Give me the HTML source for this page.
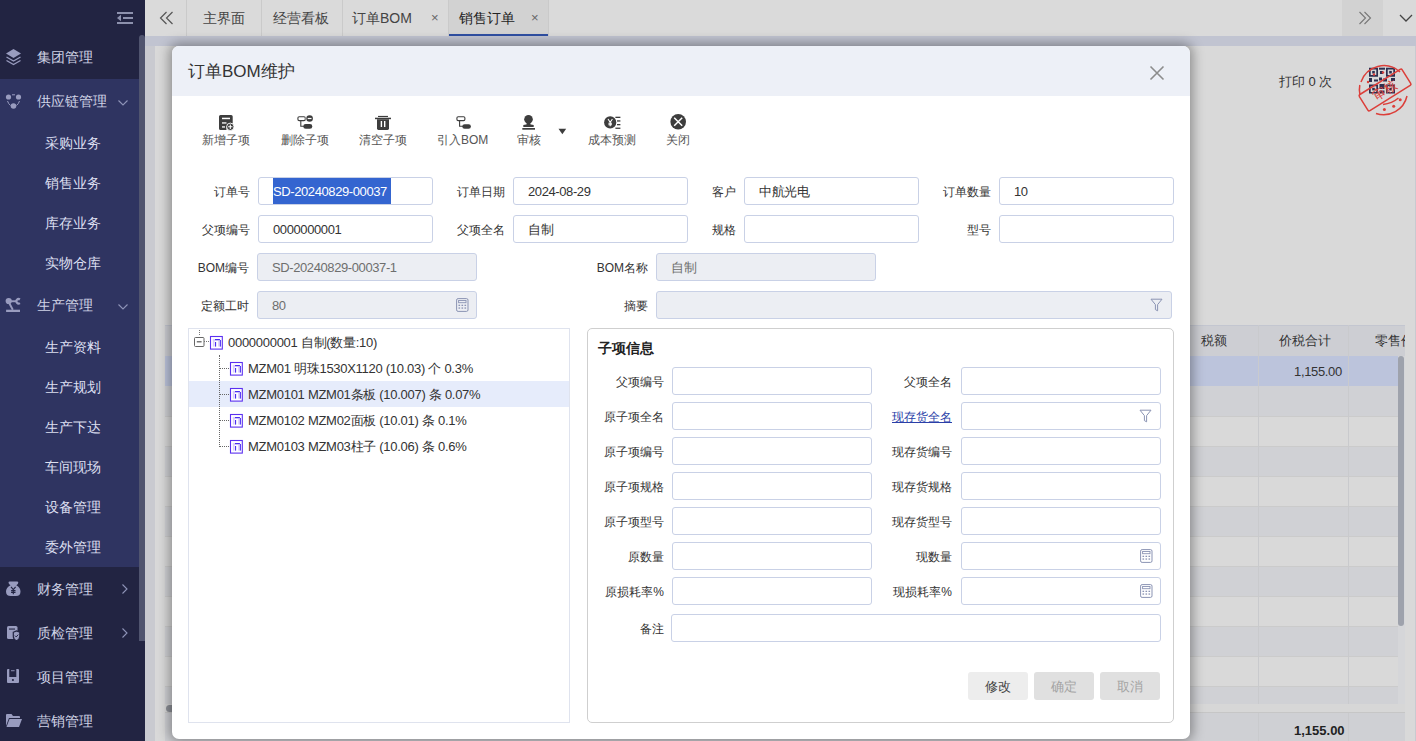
<!DOCTYPE html><html><head><meta charset="utf-8"><style>
*{margin:0;padding:0;box-sizing:border-box}
html,body{width:1416px;height:741px;overflow:hidden;background:#d9d9d9;font-family:"Liberation Sans",sans-serif;font-size:13px;color:#333;position:relative}
.a{position:absolute}
.t{position:absolute;white-space:nowrap;line-height:20px}
.mi{position:absolute;left:37px;font-size:14px;color:#d0d3e6;line-height:20px;white-space:nowrap}
.si{position:absolute;left:45px;font-size:14px;color:#dcdff0;line-height:20px;white-space:nowrap}
.tab{position:absolute;top:8px;font-size:14px;color:#444;line-height:20px;white-space:nowrap}
.vd{position:absolute;top:0;width:1px;height:36px;background:#cacaca}
.lbl{position:absolute;font-size:12px;color:#333;line-height:20px;text-align:right;white-space:nowrap}
.inp{position:absolute;height:28px;border:1px solid #c9d1e6;border-radius:3px;background:#fff}
.dis{background:#eceef3}
.itx{position:absolute;font-size:13px;line-height:20px;color:#333;white-space:nowrap;letter-spacing:-0.4px}
.tbl{position:absolute;top:132px;font-size:12px;color:#555;line-height:16px;white-space:nowrap}
.tr{position:absolute;font-size:13px;color:#333;line-height:20px;white-space:nowrap;letter-spacing:-0.28px}
.ic{position:absolute}
</style></head><body>
<div class="a" style="left:145px;top:0;width:1271px;height:36px;background:#dadada"></div>
<div class="a" style="left:145px;top:36px;width:1271px;height:10px;background:#c1c4d1"></div>
<div class="a" style="left:145px;top:46px;width:10px;height:695px;background:#c9cad0"></div>
<div class="a" style="left:1415px;top:46px;width:1px;height:695px;background:#c9cad0"></div>
<div class="a" style="left:449px;top:0;width:99px;height:36px;background:#d2d2d2"></div>
<div class="a" style="left:449px;top:34px;width:99px;height:2px;background:#2f4fa3"></div>
<div class="vd" style="left:186px"></div>
<div class="vd" style="left:261px"></div>
<div class="vd" style="left:342px"></div>
<div class="vd" style="left:448px"></div>
<div class="vd" style="left:548px"></div>
<div class="vd" style="left:1342px"></div>
<div class="a" style="left:1342px;top:0;width:41px;height:36px;background:#d2d2d2"></div>
<svg class="ic" style="left:159px;top:11px" width="16" height="14" viewBox="0 0 16 14"><path d="M7.5 1 L1.5 7 L7.5 13 M13.5 1 L7.5 7 L13.5 13" fill="none" stroke="#555" stroke-width="1.2"/></svg>
<div class="tab" style="left:203px">主界面</div>
<div class="tab" style="left:273px">经营看板</div>
<div class="tab" style="left:352px">订单BOM</div>
<div class="tab" style="left:431px;font-size:13px;color:#666">×</div>
<div class="tab" style="left:459px;color:#222">销售订单</div>
<div class="tab" style="left:531px;font-size:13px;color:#666">×</div>
<svg class="ic" style="left:1358px;top:11px" width="14" height="14" viewBox="0 0 14 14"><path d="M1.5 1 L7.5 7 L1.5 13 M6.5 1 L12.5 7 L6.5 13" fill="none" stroke="#777" stroke-width="1.1"/></svg>
<svg class="ic" style="left:1399px;top:13px" width="14" height="10" viewBox="0 0 14 10"><path d="M1 2 L7 8 L13 2" fill="none" stroke="#444" stroke-width="1.3"/></svg>
<div class="t" style="left:1279px;top:72px;font-size:13px;color:#333">打印 0 次</div>
<svg class="ic" style="left:1350px;top:60px" width="66" height="60" viewBox="0 0 66 60">
<g fill="#2d3050"><path d="M19 7.7h9v9h-9z M20.7 9.4v5.6h5.6v-5.6z" fill-rule="evenodd"/><rect x="22.2" y="10.9" width="2.6" height="2.6"/><path d="M36 7.7h9v9h-9z M37.7 9.4v5.6h5.6v-5.6z" fill-rule="evenodd"/><rect x="39.2" y="10.9" width="2.6" height="2.6"/><path d="M19 24.6h9v9h-9z M20.7 26.3v5.6h5.6v-5.6z" fill-rule="evenodd"/><rect x="22.2" y="27.8" width="2.6" height="2.6"/><path d="M36 24.6h9v9h-9z M37.7 26.3v5.6h5.6v-5.6z" fill-rule="evenodd"/><rect x="39.2" y="27.8" width="2.6" height="2.6"/><rect x="29" y="7.7" width="6" height="2"/><rect x="30" y="11" width="3" height="3"/><rect x="29" y="17.5" width="3" height="3"/><rect x="19" y="18" width="3" height="4"/><rect x="24" y="19.5" width="4" height="2"/><rect x="33" y="18.5" width="4" height="3"/><rect x="41" y="18" width="4" height="3"/><rect x="29.5" y="24" width="5" height="5"/><rect x="29.5" y="30.5" width="5" height="3"/></g>
<g fill="none" stroke="#dc3f3a" stroke-width="1.5">
<path d="M11 22 A24 24 0 0 1 50 12"/><path d="M57 36 A24 24 0 0 1 26 53.5"/><path d="M10 35 A24 24 0 0 1 9.8 25"/>
<g transform="rotate(-32 35 30)"><rect x="9.8" y="20.5" width="50.5" height="19" rx="1.5"/></g>
<path d="M33 44.5 Q42 43.5 48.5 38"/>
</g>
<g fill="#dc3f3a"><circle cx="34.4" cy="49.4" r="1.5"/><circle cx="43.7" cy="46.2" r="1.5"/><circle cx="50.2" cy="39.7" r="1.5"/><circle cx="18" cy="22" r="1.2"/><circle cx="24" cy="14.5" r="1.2"/><circle cx="33" cy="12.5" r="1.2"/></g>
<text x="35" y="34.5" font-size="13" fill="#dc3f3a" text-anchor="middle" transform="rotate(-32 35 30)">审核</text>
</svg>
<div class="a" style="left:165px;top:325px;width:1240px;height:31px;background:#cdced3;border-top:1px solid #c3c6d0"></div>
<div class="t" style="left:1201px;top:331px;font-size:13px;color:#333">税额</div>
<div class="t" style="left:1279px;top:331px;font-size:13px;color:#333">价税合计</div>
<div class="a" style="left:1360px;top:325px;width:45px;height:31px;overflow:hidden"><div class="t" style="left:15px;top:6px;font-size:13px;color:#333">零售价</div></div>
<div class="a" style="left:165px;top:356px;width:1233px;height:30px;background:#bcc4dc;"></div>
<div class="a" style="left:165px;top:386px;width:1233px;height:30px;background:#d0d1d5;"></div>
<div class="a" style="left:165px;top:416px;width:1233px;height:30px;background:#d9d9d9;border-top:1px solid #cbcbcb;"></div>
<div class="a" style="left:165px;top:446px;width:1233px;height:30px;background:#d0d1d5;border-top:1px solid #cbcbcb;"></div>
<div class="a" style="left:165px;top:476px;width:1233px;height:30px;background:#d9d9d9;border-top:1px solid #cbcbcb;"></div>
<div class="a" style="left:165px;top:506px;width:1233px;height:30px;background:#d0d1d5;border-top:1px solid #cbcbcb;"></div>
<div class="a" style="left:165px;top:536px;width:1233px;height:30px;background:#d9d9d9;border-top:1px solid #cbcbcb;"></div>
<div class="a" style="left:165px;top:566px;width:1233px;height:30px;background:#d0d1d5;border-top:1px solid #cbcbcb;"></div>
<div class="a" style="left:165px;top:596px;width:1233px;height:30px;background:#d9d9d9;border-top:1px solid #cbcbcb;"></div>
<div class="a" style="left:165px;top:626px;width:1233px;height:30px;background:#d0d1d5;border-top:1px solid #cbcbcb;"></div>
<div class="a" style="left:165px;top:656px;width:1233px;height:30px;background:#d9d9d9;border-top:1px solid #cbcbcb;"></div>
<div class="a" style="left:165px;top:686px;width:1233px;height:18px;background:#d0d1d5;border-top:1px solid #cbcbcb;"></div>
<div class="t" style="left:1294px;top:362px;font-size:13px;color:#333;letter-spacing:-0.35px">1,155.00</div>
<div class="a" style="left:1258px;top:325px;width:1px;height:379px;background:#c9cacd"></div>
<div class="a" style="left:1258px;top:712px;width:1px;height:29px;background:#c9cacd"></div>
<div class="a" style="left:1348px;top:325px;width:1px;height:379px;background:#c9cacd"></div>
<div class="a" style="left:1348px;top:712px;width:1px;height:29px;background:#c9cacd"></div>
<div class="a" style="left:1398px;top:356px;width:7px;height:349px;background:#d5d6d9"></div>
<div class="a" style="left:1398px;top:356px;width:6px;height:270px;background:#9ea2ac;border-radius:3px"></div>
<div class="a" style="left:165px;top:704px;width:1240px;height:8px;background:#d7d7d7"></div>
<div class="a" style="left:166px;top:705px;width:300px;height:7px;background:#8e9198;border-radius:4px"></div>
<div class="a" style="left:165px;top:712px;width:1240px;height:29px;background:#cfd0d4;border-top:1px solid #c6c6c6"></div>
<div class="a" style="left:1258px;top:713px;width:1px;height:28px;background:#c9cacd"></div>
<div class="a" style="left:1348px;top:713px;width:1px;height:28px;background:#c9cacd"></div>
<div class="t" style="left:1294px;top:721px;font-size:13px;font-weight:bold;color:#222">1,155.00</div>
<div class="a" style="left:0;top:0;width:145px;height:741px;background:#222442"></div>
<div class="a" style="left:0;top:79px;width:139px;height:488px;background:#2f3461"></div>
<div class="a" style="left:139px;top:35px;width:6px;height:606px;background:#50546f;border-radius:3px 3px 0 0"></div>
<svg class="ic" style="left:117px;top:11px" width="17" height="14" viewBox="0 0 17 14"><g fill="#8d91ad"><rect x="0" y="1" width="16" height="2"/><rect x="6" y="6" width="10" height="2"/><rect x="0" y="11" width="16" height="2"/><path d="M0 7 L4 3.8 L4 10.2 Z"/></g></svg>
<svg class="ic" style="left:5px;top:48px" width="17" height="18" viewBox="0 0 17 18"><path d="M8.5 1 L16 5.5 L8.5 10 L1 5.5 Z" fill="#999cbf"/><path d="M1.5 9 L8.5 13 L15.5 9 M1.5 12.5 L8.5 16.5 L15.5 12.5" fill="none" stroke="#999cbf" stroke-width="1.3"/></svg>
<svg class="ic" style="left:5px;top:93px" width="17" height="17" viewBox="0 0 17 17"><circle cx="3.5" cy="4" r="2.6" fill="#999cbf"/><circle cx="13.5" cy="4" r="2.6" fill="#999cbf"/><circle cx="8.5" cy="13" r="2.8" fill="#999cbf"/><path d="M7 1.8 H10 M2.5 8 Q3.5 11 5.5 12.5 M14.5 8 Q13.5 11 11.5 12.5" fill="none" stroke="#999cbf" stroke-width="1"/></svg>
<svg class="ic" style="left:5px;top:297px" width="16" height="16" viewBox="0 0 16 16"><circle cx="3.7" cy="4" r="3.1" fill="#999cbf"/><rect x="6" y="3.3" width="5" height="1.9" fill="#999cbf"/><path d="M14.9 2.5 A2.2 2.2 0 1 0 14.9 6.1" fill="none" stroke="#999cbf" stroke-width="2.2"/><path d="M4.3 6.2 L7.8 12.8" stroke="#999cbf" stroke-width="1.9"/><rect x="1.1" y="12.7" width="13.9" height="2.3" fill="#999cbf"/></svg>
<svg class="ic" style="left:5px;top:580px" width="17" height="17" viewBox="0 0 17 17"><path d="M3.5 2.5 Q3.5 1.5 4.8 1.5 H12 Q13.3 1.5 13.3 2.5 Q13.3 4 11.3 5.3 Q15.5 7.8 15.5 11.5 Q15.5 16 11 16 H5.8 Q1 16 1 11.5 Q1 7.8 5.5 5.3 Q3.5 4 3.5 2.5 Z" fill="#999cbf"/><path d="M6 6.8 L8.3 9.6 L10.6 6.8 M8.3 9.6 V14.2 M6.1 10.6 H10.5 M6.1 12.4 H10.5" fill="none" stroke="#222442" stroke-width="1.1"/></svg>
<svg class="ic" style="left:6px;top:624px" width="16" height="18" viewBox="0 0 16 18"><rect x="1" y="2" width="10.5" height="13" rx="1.6" fill="#999cbf"/><rect x="3" y="4.5" width="6" height="1.1" fill="#222442"/><path d="M7.3 8.2 L10.5 6.9 L13.8 8.2 V12.2 Q13.8 15.3 10.5 16.8 Q7.3 15.3 7.3 12.2 Z" fill="#999cbf" stroke="#222442" stroke-width="1.2"/><path d="M8.9 11.6 L10.2 12.9 L12.3 10.6" fill="none" stroke="#222442" stroke-width="1"/></svg>
<svg class="ic" style="left:6px;top:668px" width="14" height="16" viewBox="0 0 14 16"><path d="M1 2 Q1 1 2 1 H12 Q13 1 13 2 V14 Q13 15 12 15 H2 Q1 15 1 14 Z" fill="#999cbf"/><rect x="3.3" y="0.5" width="7" height="8.5" fill="#222442"/><rect x="5" y="2.3" width="3.6" height="0.9" fill="#999cbf"/><circle cx="6.9" cy="12" r="1.1" fill="#222442"/></svg>
<svg class="ic" style="left:5px;top:713px" width="18" height="15" viewBox="0 0 18 15"><path d="M1 2 Q1 1 2 1 H6.5 L8 3 H14 Q15 3 15 4 V5 H4 L1 13 Z" fill="#999cbf"/><path d="M4.5 6 H17 L14 14 H1.5 Z" fill="#999cbf"/></svg>
<div class="mi" style="top:47px">集团管理</div>
<div class="mi" style="top:91px">供应链管理</div>
<div class="mi" style="top:295px">生产管理</div>
<div class="mi" style="top:579px">财务管理</div>
<div class="mi" style="top:623px">质检管理</div>
<div class="mi" style="top:667px">项目管理</div>
<div class="mi" style="top:711px">营销管理</div>
<div class="si" style="top:133px">采购业务</div>
<div class="si" style="top:173px">销售业务</div>
<div class="si" style="top:213px">库存业务</div>
<div class="si" style="top:253px">实物仓库</div>
<div class="si" style="top:337px">生产资料</div>
<div class="si" style="top:377px">生产规划</div>
<div class="si" style="top:417px">生产下达</div>
<div class="si" style="top:457px">车间现场</div>
<div class="si" style="top:497px">设备管理</div>
<div class="si" style="top:537px">委外管理</div>
<svg class="ic" style="left:118px;top:100px" width="10" height="6" viewBox="0 0 10 6"><path d="M0.5 0.5 L5 5 L9.5 0.5" fill="none" stroke="#8f94b8" stroke-width="1.1"/></svg>
<svg class="ic" style="left:118px;top:304px" width="10" height="6" viewBox="0 0 10 6"><path d="M0.5 0.5 L5 5 L9.5 0.5" fill="none" stroke="#8f94b8" stroke-width="1.1"/></svg>
<svg class="ic" style="left:122px;top:584px" width="6" height="10" viewBox="0 0 6 10"><path d="M0.5 0.5 L5 5 L0.5 9.5" fill="none" stroke="#8f94b8" stroke-width="1.1"/></svg>
<svg class="ic" style="left:122px;top:628px" width="6" height="10" viewBox="0 0 6 10"><path d="M0.5 0.5 L5 5 L0.5 9.5" fill="none" stroke="#8f94b8" stroke-width="1.1"/></svg>
<div class="a" style="left:172px;top:46px;width:1018px;height:693px;background:#fff;border-radius:7px;box-shadow:0 0 12px 3px rgba(0,0,0,.35);overflow:hidden"><div class="a" style="left:0;top:0;width:1018px;height:50px;background:#edf0f7"></div></div>
<div class="t" style="left:188px;top:61px;font-size:17px;line-height:22px;color:#333">订单BOM维护</div>
<svg class="ic" style="left:1149px;top:65px" width="16" height="16" viewBox="0 0 16 16"><path d="M1.5 1.5 L14.5 14.5 M14.5 1.5 L1.5 14.5" stroke="#8c8c8c" stroke-width="1.6"/></svg>
<svg class="ic" style="left:218px;top:114px" width="18" height="18" viewBox="0 0 18 18">
<path d="M1 2.5 Q1 1 2.5 1 H13.2 Q14.7 1 14.7 2.5 V9.5 A5 5 0 0 0 8.5 15.9 H2.5 Q1 15.9 1 14.4 Z" fill="#3d3d3d"/>
<rect x="4" y="3.7" width="8" height="1.5" fill="#fff"/><rect x="4" y="8.3" width="4.5" height="1.3" fill="#fff"/><rect x="4" y="12.3" width="3" height="1.3" fill="#fff"/>
<circle cx="12.3" cy="12.8" r="3.7" fill="#3d3d3d" stroke="#fff" stroke-width="0.9"/><path d="M12.3 10.6 V15 M10.1 12.8 H14.5" stroke="#fff" stroke-width="1.1"/></svg>
<svg class="ic" style="left:296px;top:114px" width="18" height="16" viewBox="0 0 18 16">
<rect x="1.9" y="2.7" width="7.4" height="3.9" rx="1.3" fill="none" stroke="#3d3d3d" stroke-width="1.1"/>
<path d="M4.8 6.6 V12.3 H8" fill="none" stroke="#3d3d3d" stroke-width="1.1"/>
<rect x="7.3" y="10" width="9" height="4.8" rx="2.4" fill="#3d3d3d"/>
<circle cx="13.6" cy="4.5" r="3.9" fill="#fff"/><circle cx="13.6" cy="4.5" r="3.3" fill="#3d3d3d"/><rect x="11.7" y="3.9" width="3.8" height="1.2" fill="#fff"/></svg>
<svg class="ic" style="left:374px;top:114px" width="18" height="17" viewBox="0 0 18 17">
<rect x="4" y="1.9" width="10" height="1.1" fill="#3d3d3d"/><rect x="1" y="3.7" width="16" height="1.5" fill="#3d3d3d"/>
<path d="M3 5.2 H15 V14.5 Q15 15.9 13.6 15.9 H4.4 Q3 15.9 3 14.5 Z" fill="#3d3d3d"/>
<rect x="6.7" y="7" width="1.4" height="6" fill="#fff"/><rect x="10" y="7" width="1.4" height="6" fill="#fff"/></svg>
<svg class="ic" style="left:455px;top:114px" width="18" height="16" viewBox="0 0 18 16">
<rect x="1.9" y="2.7" width="8" height="3.9" rx="1.3" fill="none" stroke="#3d3d3d" stroke-width="1.1"/>
<path d="M4.6 6.6 V12.3 H8" fill="none" stroke="#3d3d3d" stroke-width="1.1"/>
<rect x="7.3" y="10.2" width="8.6" height="4.6" rx="2.3" fill="#3d3d3d"/></svg>
<svg class="ic" style="left:521px;top:114px" width="16" height="17" viewBox="0 0 16 17">
<circle cx="7.5" cy="5.2" r="4.3" fill="#3d3d3d"/><path d="M5.8 7.5 H9.2 L9.6 11.4 H5.4 Z" fill="#3d3d3d"/>
<path d="M2.3 11 Q2.3 10.6 5 10.6 H10 Q12.7 10.6 12.7 11 V12.9 H2.3 Z" fill="#3d3d3d"/><rect x="1.3" y="14" width="12.7" height="1.7" fill="#3d3d3d"/></svg>
<svg class="ic" style="left:558px;top:128px" width="9" height="7" viewBox="0 0 9 7"><path d="M0.5 0.8 H8.2 L4.35 6.3 Z" fill="#3d3d3d"/></svg>
<svg class="ic" style="left:603px;top:115px" width="19" height="15" viewBox="0 0 19 15">
<circle cx="7.2" cy="7.4" r="6.1" fill="#3d3d3d"/><path d="M5 4 L7.2 7.2 L9.4 4 M7.2 7.2 V11.2 M5.4 8.3 H9 M5.4 9.8 H9" fill="none" stroke="#fff" stroke-width="1.1"/>
<rect x="12.4" y="1.7" width="5" height="1.3" fill="#3d3d3d"/><rect x="14" y="5.3" width="3.4" height="1.3" fill="#3d3d3d"/><rect x="14" y="9" width="3.4" height="1.3" fill="#3d3d3d"/><rect x="12.4" y="12.6" width="5" height="1.3" fill="#3d3d3d"/></svg>
<svg class="ic" style="left:669px;top:113px" width="18" height="18" viewBox="0 0 18 18">
<circle cx="9.2" cy="8.8" r="7.8" fill="#3d3d3d"/><path d="M5.2 4.8 L13.2 12.8 M13.2 4.8 L5.2 12.8" stroke="#fff" stroke-width="1.5"/></svg>
<div class="tbl" style="left:202px">新增子项</div>
<div class="tbl" style="left:281px">删除子项</div>
<div class="tbl" style="left:359px">清空子项</div>
<div class="tbl" style="left:437px">引入BOM</div>
<div class="tbl" style="left:517px">审核</div>
<div class="tbl" style="left:588px">成本预测</div>
<div class="tbl" style="left:666px">关闭</div>
<div class="lbl" style="right:1166px;top:182px">订单号</div>
<div class="inp" style="left:258px;top:177px;width:175px"></div>
<div class="a" style="left:273px;top:178px;width:118px;height:26px;background:#3465d0"></div>
<div class="itx" style="left:273px;top:182px;color:#fff">SD-20240829-00037</div>
<div class="lbl" style="right:911px;top:182px">订单日期</div>
<div class="inp" style="left:513px;top:177px;width:175px"></div>
<div class="itx" style="left:528px;top:182px;color:#333">2024-08-29</div>
<div class="lbl" style="right:680px;top:182px">客户</div>
<div class="inp" style="left:744px;top:177px;width:175px"></div>
<div class="itx" style="left:759px;top:182px;color:#333">中航光电</div>
<div class="lbl" style="right:425px;top:182px">订单数量</div>
<div class="inp" style="left:999px;top:177px;width:175px"></div>
<div class="itx" style="left:1014px;top:182px;color:#333">10</div>
<div class="lbl" style="right:1166px;top:220px">父项编号</div>
<div class="inp" style="left:258px;top:215px;width:175px"></div>
<div class="itx" style="left:273px;top:220px;color:#333">0000000001</div>
<div class="lbl" style="right:911px;top:220px">父项全名</div>
<div class="inp" style="left:513px;top:215px;width:175px"></div>
<div class="itx" style="left:528px;top:220px;color:#333">自制</div>
<div class="lbl" style="right:680px;top:220px">规格</div>
<div class="inp" style="left:744px;top:215px;width:175px"></div>
<div class="lbl" style="right:425px;top:220px">型号</div>
<div class="inp" style="left:999px;top:215px;width:175px"></div>
<div class="lbl" style="right:1167px;top:258px">BOM编号</div>
<div class="inp dis" style="left:257px;top:253px;width:220px"></div>
<div class="itx" style="left:272px;top:258px;color:#6e6e6e">SD-20240829-00037-1</div>
<div class="lbl" style="right:768px;top:258px">BOM名称</div>
<div class="inp dis" style="left:656px;top:253px;width:220px"></div>
<div class="itx" style="left:671px;top:258px;color:#6e6e6e">自制</div>
<div class="lbl" style="right:1167px;top:296px">定额工时</div>
<div class="inp dis" style="left:257px;top:291px;width:220px"></div>
<div class="itx" style="left:272px;top:296px;color:#6e6e6e">80</div>
<svg class="ic" style="left:456px;top:298px" width="13" height="14" viewBox="0 0 13 14"><rect x="0.6" y="0.6" width="11.4" height="12.8" rx="1.5" fill="none" stroke="#8a93b3" stroke-width="1"/><rect x="2.6" y="2.5" width="7.4" height="2.2" fill="none" stroke="#8a93b3" stroke-width="0.9"/><g fill="#8a93b3"><rect x="2.5" y="6.7" width="1.6" height="1.3"/><rect x="5.5" y="6.7" width="1.6" height="1.3"/><rect x="8.5" y="6.7" width="1.6" height="1.3"/><rect x="2.5" y="9.4" width="1.6" height="1.3"/><rect x="5.5" y="9.4" width="1.6" height="1.3"/><rect x="8.5" y="9.4" width="1.6" height="1.3"/></g></svg>
<div class="lbl" style="right:768px;top:296px">摘要</div>
<div class="inp dis" style="left:656px;top:291px;width:516px"></div>
<svg class="ic" style="left:1150px;top:298px" width="13" height="14" viewBox="0 0 13 14"><path d="M1 1.2 H12 L7.6 6.6 V12.8 L5.4 11.6 V6.6 Z" fill="none" stroke="#8a93b3" stroke-width="1"/></svg>
<div class="a" style="left:188px;top:328px;width:382px;height:395px;border:1px solid #dfe3ee;background:#fff"></div>
<div class="a" style="left:189px;top:381px;width:380px;height:26px;background:#e6ecfb"></div>
<svg class="ic" style="left:193px;top:329px" width="18" height="19" viewBox="0 0 18 19"><path d="M6.5 1 V6" stroke="#777" stroke-width="1" stroke-dasharray="1 1"/><rect x="1.5" y="8.5" width="9.5" height="9" rx="1" fill="#fff" stroke="#666" stroke-width="1"/><path d="M3.8 12.8 H8.6" stroke="#555" stroke-width="1.2"/><path d="M11 12.5 H17" stroke="#777" stroke-width="1" stroke-dasharray="1 1"/></svg>
<svg class="ic" style="left:209px;top:335px" width="16" height="16" viewBox="0 0 16 16"><rect x="1.5" y="1.5" width="11.8" height="12.6" fill="#fff" stroke="#5b30f0" stroke-width="1.1"/><g fill="#d9cdfb"><rect x="3.85" y="3.9" width="1.7" height="7.7"/><rect x="3.85" y="4.1" width="7.25" height="1.9"/><rect x="9.2" y="5" width="1.9" height="6.6"/></g><g fill="#4a2ff0"><rect x="6" y="4" width="4.9" height="1.1"/><rect x="6" y="7" width="1.1" height="4.6"/><rect x="10.9" y="5" width="1" height="6.6"/></g></svg>
<div class="tr" style="left:228px;top:333px">0000000001 自制(数量:10)</div>
<div class="a" style="left:219px;top:355px;width:1px;height:92px;border-left:1px dotted #666"></div>
<div class="a" style="left:220px;top:368px;width:9px;height:1px;border-top:1px dotted #666"></div>
<svg class="ic" style="left:229px;top:361px" width="16" height="16" viewBox="0 0 16 16"><rect x="1.5" y="1.5" width="11.8" height="12.6" fill="#fff" stroke="#5b30f0" stroke-width="1.1"/><g fill="#d9cdfb"><rect x="3.85" y="3.9" width="1.7" height="7.7"/><rect x="3.85" y="4.1" width="7.25" height="1.9"/><rect x="9.2" y="5" width="1.9" height="6.6"/></g><g fill="#4a2ff0"><rect x="6" y="4" width="4.9" height="1.1"/><rect x="6" y="7" width="1.1" height="4.6"/><rect x="10.9" y="5" width="1" height="6.6"/></g></svg>
<div class="tr" style="left:248px;top:359px">MZM01 明珠1530X1120 (10.03) 个 0.3%</div>
<div class="a" style="left:220px;top:394px;width:9px;height:1px;border-top:1px dotted #666"></div>
<svg class="ic" style="left:229px;top:387px" width="16" height="16" viewBox="0 0 16 16"><rect x="1.5" y="1.5" width="11.8" height="12.6" fill="#fff" stroke="#5b30f0" stroke-width="1.1"/><g fill="#d9cdfb"><rect x="3.85" y="3.9" width="1.7" height="7.7"/><rect x="3.85" y="4.1" width="7.25" height="1.9"/><rect x="9.2" y="5" width="1.9" height="6.6"/></g><g fill="#4a2ff0"><rect x="6" y="4" width="4.9" height="1.1"/><rect x="6" y="7" width="1.1" height="4.6"/><rect x="10.9" y="5" width="1" height="6.6"/></g></svg>
<div class="tr" style="left:248px;top:385px">MZM0101 MZM01条板 (10.007) 条 0.07%</div>
<div class="a" style="left:220px;top:420px;width:9px;height:1px;border-top:1px dotted #666"></div>
<svg class="ic" style="left:229px;top:413px" width="16" height="16" viewBox="0 0 16 16"><rect x="1.5" y="1.5" width="11.8" height="12.6" fill="#fff" stroke="#5b30f0" stroke-width="1.1"/><g fill="#d9cdfb"><rect x="3.85" y="3.9" width="1.7" height="7.7"/><rect x="3.85" y="4.1" width="7.25" height="1.9"/><rect x="9.2" y="5" width="1.9" height="6.6"/></g><g fill="#4a2ff0"><rect x="6" y="4" width="4.9" height="1.1"/><rect x="6" y="7" width="1.1" height="4.6"/><rect x="10.9" y="5" width="1" height="6.6"/></g></svg>
<div class="tr" style="left:248px;top:411px">MZM0102 MZM02面板 (10.01) 条 0.1%</div>
<div class="a" style="left:220px;top:446px;width:9px;height:1px;border-top:1px dotted #666"></div>
<svg class="ic" style="left:229px;top:439px" width="16" height="16" viewBox="0 0 16 16"><rect x="1.5" y="1.5" width="11.8" height="12.6" fill="#fff" stroke="#5b30f0" stroke-width="1.1"/><g fill="#d9cdfb"><rect x="3.85" y="3.9" width="1.7" height="7.7"/><rect x="3.85" y="4.1" width="7.25" height="1.9"/><rect x="9.2" y="5" width="1.9" height="6.6"/></g><g fill="#4a2ff0"><rect x="6" y="4" width="4.9" height="1.1"/><rect x="6" y="7" width="1.1" height="4.6"/><rect x="10.9" y="5" width="1" height="6.6"/></g></svg>
<div class="tr" style="left:248px;top:437px">MZM0103 MZM03柱子 (10.06) 条 0.6%</div>
<div class="a" style="left:587px;top:328px;width:587px;height:395px;border:1px solid #cfcfcf;border-radius:5px;background:#fff"></div>
<div class="t" style="left:598px;top:338px;font-size:14px;font-weight:bold;color:#222">子项信息</div>
<div class="lbl" style="right:752px;top:372px">父项编号</div>
<div class="inp" style="left:672px;top:367px;width:200px"></div>
<div class="lbl" style="right:464px;top:372px">父项全名</div>
<div class="inp" style="left:961px;top:367px;width:200px"></div>
<div class="lbl" style="right:752px;top:407px">原子项全名</div>
<div class="inp" style="left:672px;top:402px;width:200px"></div>
<div class="lbl" style="right:464px;top:407px;color:#2b3fa8;text-decoration:underline">现存货全名</div>
<div class="inp" style="left:961px;top:402px;width:200px"></div>
<svg class="ic" style="left:1139px;top:409px" width="13" height="14" viewBox="0 0 13 14"><path d="M1 1.2 H12 L7.6 6.6 V12.8 L5.4 11.6 V6.6 Z" fill="none" stroke="#8a93b3" stroke-width="1"/></svg>
<div class="lbl" style="right:752px;top:442px">原子项编号</div>
<div class="inp" style="left:672px;top:437px;width:200px"></div>
<div class="lbl" style="right:464px;top:442px">现存货编号</div>
<div class="inp" style="left:961px;top:437px;width:200px"></div>
<div class="lbl" style="right:752px;top:477px">原子项规格</div>
<div class="inp" style="left:672px;top:472px;width:200px"></div>
<div class="lbl" style="right:464px;top:477px">现存货规格</div>
<div class="inp" style="left:961px;top:472px;width:200px"></div>
<div class="lbl" style="right:752px;top:512px">原子项型号</div>
<div class="inp" style="left:672px;top:507px;width:200px"></div>
<div class="lbl" style="right:464px;top:512px">现存货型号</div>
<div class="inp" style="left:961px;top:507px;width:200px"></div>
<div class="lbl" style="right:752px;top:547px">原数量</div>
<div class="inp" style="left:672px;top:542px;width:200px"></div>
<div class="lbl" style="right:464px;top:547px">现数量</div>
<div class="inp" style="left:961px;top:542px;width:200px"></div>
<svg class="ic" style="left:1140px;top:549px" width="13" height="14" viewBox="0 0 13 14"><rect x="0.6" y="0.6" width="11.4" height="12.8" rx="1.5" fill="none" stroke="#8a93b3" stroke-width="1"/><rect x="2.6" y="2.5" width="7.4" height="2.2" fill="none" stroke="#8a93b3" stroke-width="0.9"/><g fill="#8a93b3"><rect x="2.5" y="6.7" width="1.6" height="1.3"/><rect x="5.5" y="6.7" width="1.6" height="1.3"/><rect x="8.5" y="6.7" width="1.6" height="1.3"/><rect x="2.5" y="9.4" width="1.6" height="1.3"/><rect x="5.5" y="9.4" width="1.6" height="1.3"/><rect x="8.5" y="9.4" width="1.6" height="1.3"/></g></svg>
<div class="lbl" style="right:752px;top:582px">原损耗率%</div>
<div class="inp" style="left:672px;top:577px;width:200px"></div>
<div class="lbl" style="right:464px;top:582px">现损耗率%</div>
<div class="inp" style="left:961px;top:577px;width:200px"></div>
<svg class="ic" style="left:1140px;top:584px" width="13" height="14" viewBox="0 0 13 14"><rect x="0.6" y="0.6" width="11.4" height="12.8" rx="1.5" fill="none" stroke="#8a93b3" stroke-width="1"/><rect x="2.6" y="2.5" width="7.4" height="2.2" fill="none" stroke="#8a93b3" stroke-width="0.9"/><g fill="#8a93b3"><rect x="2.5" y="6.7" width="1.6" height="1.3"/><rect x="5.5" y="6.7" width="1.6" height="1.3"/><rect x="8.5" y="6.7" width="1.6" height="1.3"/><rect x="2.5" y="9.4" width="1.6" height="1.3"/><rect x="5.5" y="9.4" width="1.6" height="1.3"/><rect x="8.5" y="9.4" width="1.6" height="1.3"/></g></svg>
<div class="lbl" style="right:752px;top:619px">备注</div>
<div class="inp" style="left:671px;top:614px;width:490px"></div>
<div class="a" style="left:968px;top:672px;width:60px;height:28px;background:#ededed;border-radius:3px;font-size:13px;line-height:30px;text-align:center;color:#444">修改</div>
<div class="a" style="left:1034px;top:672px;width:60px;height:28px;background:#e0e0e0;border-radius:3px;font-size:13px;line-height:30px;text-align:center;color:#a3a3a3">确定</div>
<div class="a" style="left:1100px;top:672px;width:60px;height:28px;background:#e0e0e0;border-radius:3px;font-size:13px;line-height:30px;text-align:center;color:#a3a3a3">取消</div>
</body></html>
